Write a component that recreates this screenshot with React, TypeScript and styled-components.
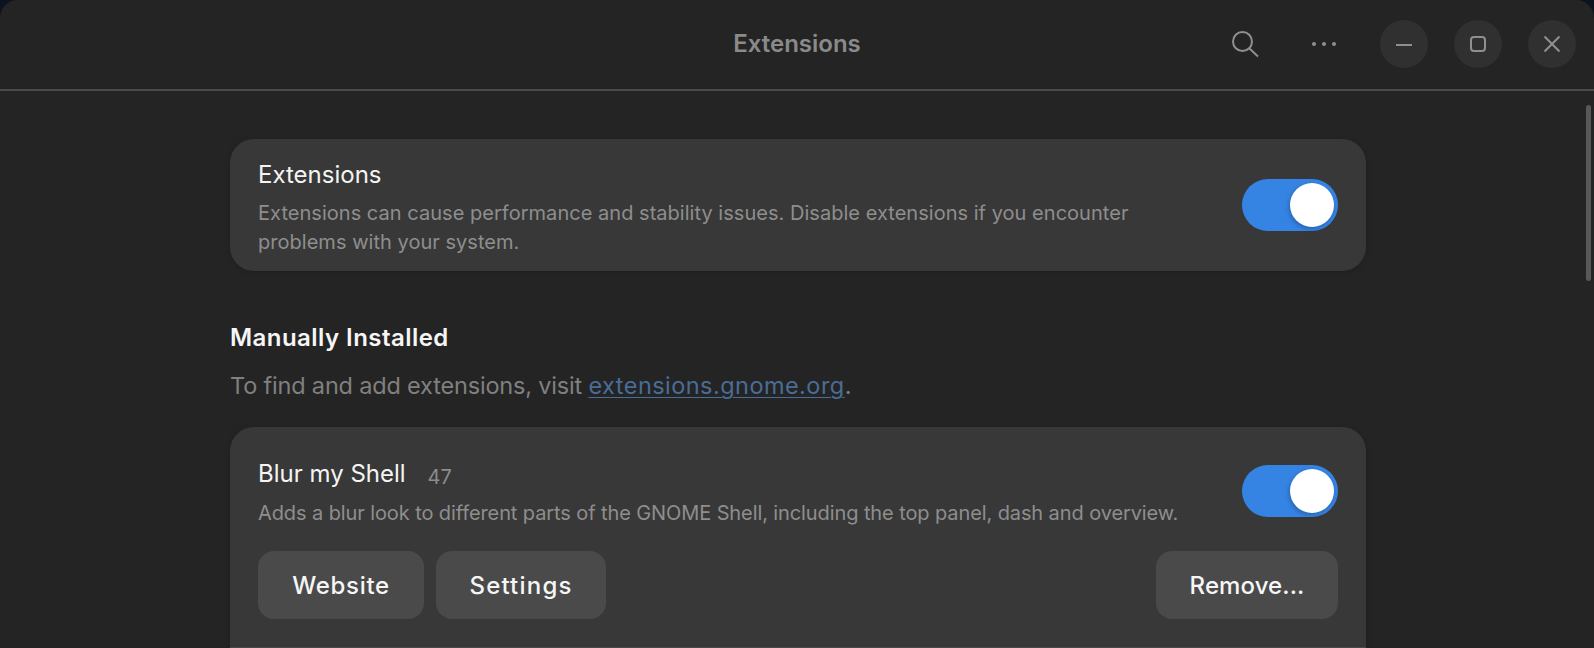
import React from "react";
import styled, { createGlobalStyle } from "styled-components";

const GlobalStyle = createGlobalStyle`
  html, body {
    margin: 0;
    height: 100%;
    background: #0b1420;
    overflow: hidden;
  }
  * { box-sizing: border-box; }
`;

const Window = styled.div`
  position: relative;
  width: 1594px;
  height: 648px;
  background: #242424;
  border-radius: 18px 18px 0 0;
  overflow: hidden;
  font-family: Inter, "Noto Sans", sans-serif;
`;

const Header = styled.header`
  height: 91px;
  border-bottom: 2px solid #4a4a4a;
  display: flex;
  align-items: center;
  justify-content: flex-end;
  padding: 0 18px 2px 0;
  position: relative;
`;

const Title = styled.h1`
  position: absolute;
  left: 0;
  right: 0;
  top: 27px;
  margin: 0;
  text-align: center;
  font-size: 24px;
  line-height: 34px;
  font-weight: 600;
  color: #8a8a8a;
`;

const ToolButton = styled.div`
  width: 48px;
  height: 48px;
  display: flex;
  align-items: center;
  justify-content: center;
  color: #8f8f8f;
`;

const ToolGroup = styled.div`
  display: flex;
  gap: 31px;
  margin-right: 32px;
`;

const WindowButtons = styled.div`
  display: flex;
  gap: 26px;
`;

const WindowButton = styled(ToolButton)`
  border-radius: 50%;
  background: #303030;
`;

const Content = styled.main`
  width: 1136px;
  margin: 0 0 0 230px;
  padding-top: 48px;
`;

const Card = styled.section`
  background: #383838;
  border-radius: 24px;
  box-shadow: 0 1px 5px rgba(0, 0, 0, 0.18);
  padding: 21px 28px 0;
  height: 132px;
`;

const Row = styled.div`
  display: flex;
  justify-content: space-between;
`;

const RowText = styled.div`
  width: 950px;
`;

const TitleLine = styled.div`
  display: flex;
  align-items: baseline;
  gap: 22px;
`;

const RowTitle = styled.div`
  font-size: 24px;
  line-height: 30px;
  font-weight: 400;
  color: #f4f4f4;
`;

const Version = styled.span`
  font-size: 20px;
  line-height: 30px;
  color: #8c8c8c;
  position: relative;
  top: 2px;
`;

const Description = styled.p<{ $spacing: number }>`
  margin: 9px 0 0;
  font-size: 20px;
  line-height: 29px;
  letter-spacing: ${(p) => p.$spacing}px;
  color: #8e8e8e;
`;

const Switch = styled.div`
  flex: none;
  width: 96px;
  height: 52px;
  margin-top: 19px;
  border-radius: 26px;
  background: #3584e4;
  display: flex;
  align-items: center;
  justify-content: flex-end;
  padding-right: 4px;
`;

const ExtensionSwitch = styled(Switch)`
  margin-top: 6px;
`;

const Knob = styled.div`
  width: 44px;
  height: 44px;
  border-radius: 50%;
  background: #fff;
  box-shadow: -1px 2px 5px rgba(0, 0, 0, 0.25);
`;

const SectionTitle = styled.h2`
  margin: 53px 0 0;
  font-size: 24px;
  line-height: 28px;
  font-weight: 600;
  letter-spacing: 0.45px;
  color: #f6f6f6;
`;

const SectionNote = styled.p`
  margin: 18px 0 0;
  font-size: 23.5px;
  line-height: 32px;
  letter-spacing: -0.18px;
  color: #808080;
`;

const NoteLink = styled.a`
  color: #4a6d96;
  letter-spacing: 0.45px;
  text-decoration: underline;
  text-underline-offset: 3px;
  text-decoration-thickness: 1px;
`;

const ExtensionCard = styled(Card)`
  margin-top: 25px;
  height: 221px;
  padding-top: 32px;
  border-radius: 24px 24px 0 0;
  border-bottom: 1px solid #4a4a4a;
`;

const Actions = styled.div`
  display: flex;
  gap: 12px;
  margin-top: 23px;
`;

const ActionButton = styled.button<{ $width: number; $spacing: number }>`
  width: ${(p) => p.$width}px;
  height: 68px;
  border: none;
  border-radius: 16px;
  background: #4a4a4a;
  color: #f6f6f6;
  font: 500 24px Inter, "Noto Sans", sans-serif;
  letter-spacing: ${(p) => p.$spacing}px;
  padding: 0;

  &:last-child {
    margin-left: auto;
  }
`;

const ScrollThumb = styled.div`
  position: absolute;
  right: 3px;
  top: 105px;
  width: 5px;
  height: 176px;
  border-radius: 3px;
  background: #585858;
`;

function SearchIcon() {
  return (
    <svg width="28" height="28" viewBox="0 0 28 28" fill="none" stroke="currentColor" strokeWidth="2">
      <circle cx="11.5" cy="11.5" r="9.5" />
      <path d="M18.5 18.5 L27 26.5" />
    </svg>
  );
}

function MoreIcon() {
  return (
    <svg width="28" height="6" viewBox="0 0 28 6" fill="currentColor">
      <circle cx="4" cy="3" r="2" />
      <circle cx="14" cy="3" r="2" />
      <circle cx="24" cy="3" r="2" />
    </svg>
  );
}

function MinimizeIcon() {
  return (
    <svg width="18" height="18" viewBox="0 0 18 18" stroke="currentColor" strokeWidth="2">
      <path d="M1 10 H17" />
    </svg>
  );
}

function MaximizeIcon() {
  return (
    <svg width="18" height="18" viewBox="0 0 18 18" fill="none" stroke="currentColor" strokeWidth="2">
      <rect x="2" y="2" width="14" height="14" rx="3" />
    </svg>
  );
}

function CloseIcon() {
  return (
    <svg width="18" height="18" viewBox="0 0 18 18" stroke="currentColor" strokeWidth="2">
      <path d="M1.5 1.5 L16.5 16.5 M16.5 1.5 L1.5 16.5" />
    </svg>
  );
}

export default function App() {
  return (
    <>
      <GlobalStyle />
      <Window>
        <Header>
          <Title>Extensions</Title>
          <ToolGroup>
            <ToolButton>
              <SearchIcon />
            </ToolButton>
            <ToolButton>
              <MoreIcon />
            </ToolButton>
          </ToolGroup>
          <WindowButtons>
            <WindowButton>
              <MinimizeIcon />
            </WindowButton>
            <WindowButton>
              <MaximizeIcon />
            </WindowButton>
            <WindowButton>
              <CloseIcon />
            </WindowButton>
          </WindowButtons>
        </Header>
        <Content>
          <Card>
            <Row>
              <RowText>
                <RowTitle>Extensions</RowTitle>
                <Description $spacing={0.03}>
                  Extensions can cause performance and stability issues. Disable extensions if you encounter problems
                  with your system.
                </Description>
              </RowText>
              <Switch>
                <Knob />
              </Switch>
            </Row>
          </Card>
          <SectionTitle>Manually Installed</SectionTitle>
          <SectionNote>
            To find and add extensions, visit <NoteLink href="#">extensions.gnome.org</NoteLink>.
          </SectionNote>
          <ExtensionCard>
            <Row>
              <RowText>
                <TitleLine>
                  <RowTitle>Blur my Shell</RowTitle>
                  <Version>47</Version>
                </TitleLine>
                <Description $spacing={-0.1}>
                  Adds a blur look to different parts of the GNOME Shell, including the top panel, dash and overview.
                </Description>
              </RowText>
              <ExtensionSwitch>
                <Knob />
              </ExtensionSwitch>
            </Row>
            <Actions>
              <ActionButton $width={166} $spacing={0.7}>
                Website
              </ActionButton>
              <ActionButton $width={170} $spacing={1.2}>
                Settings
              </ActionButton>
              <ActionButton $width={182} $spacing={0.1}>
                Remove...
              </ActionButton>
            </Actions>
          </ExtensionCard>
        </Content>
        <ScrollThumb />
      </Window>
    </>
  );
}
